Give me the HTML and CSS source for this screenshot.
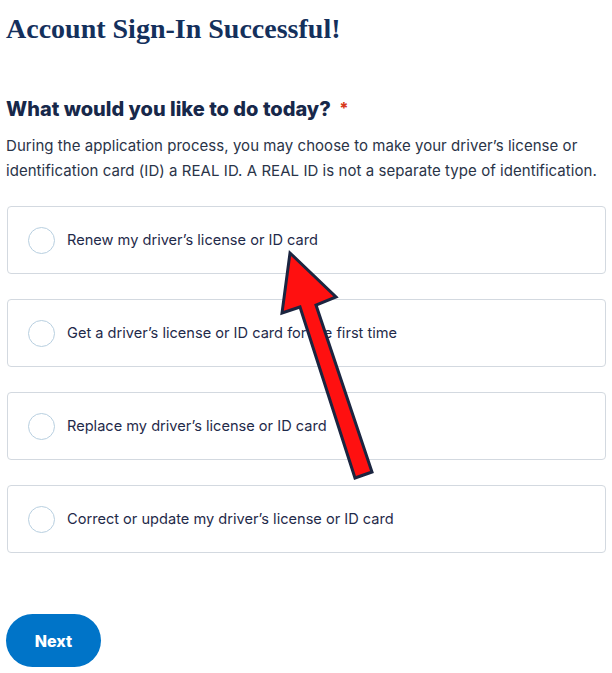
FILE: index.html
```html
<!DOCTYPE html>
<html lang="en">
<head>
    <meta charset="UTF-8">
    <meta name="viewport" content="width=device-width, initial-scale=1.0">
    <title>Account Sign-In Successful</title>
    <link rel="stylesheet" href="styles.css">
</head>
<body>
    <main class="page">
        <h1 class="title">Account Sign-In Successful!</h1>

        <form class="choice-form">
            <h2 class="question">What would you like to do today? <span class="required">*</span></h2>
            <p class="hint">During the application process, you may choose to make your driver’s license or identification card (ID) a REAL ID. A REAL ID is not a separate type of identification.</p>

            <div class="options">
                <label class="option">
                    <span class="radio"></span>
                    <span class="option-text">Renew my driver’s license or ID card</span>
                </label>
                <label class="option">
                    <span class="radio"></span>
                    <span class="option-text">Get a driver’s license or ID card for the first time</span>
                </label>
                <label class="option">
                    <span class="radio"></span>
                    <span class="option-text">Replace my driver’s license or ID card</span>
                </label>
                <label class="option">
                    <span class="radio"></span>
                    <span class="option-text">Correct or update my driver’s license or ID card</span>
                </label>
            </div>

            <button type="button" class="next-btn">Next</button>
        </form>

        <!-- annotation arrow drawn over the options -->
        <svg class="arrow" width="612" height="673" viewBox="0 0 612 673">
            <polygon points="290,253 336,297 316,305 372,472 355,478 300,307 282,313" fill="#ff1010" stroke="#1b2540" stroke-width="3" stroke-linejoin="miter"/>
        </svg>
    </main>
</body>
</html>
```

FILE: styles.css
```css
body {
    margin: 0;
    padding: 0;
    background-color: #fff;
    font-family: 'Inter', sans-serif;
    color: #1b2a47;
}
.page {
    position: relative;
    padding: 0 6px;
}
.title {
    margin: 0;
    padding-top: 12px;
    font-family: 'Liberation Serif', serif;
    font-size: 28px;
    font-weight: bold;
    line-height: 34px;
    color: #14305c;
}
.choice-form {
    margin-top: 49px;
}
.question {
    margin: 0;
    font-size: 20px;
    font-weight: 800;
    line-height: 26px;
    color: #17284a;
}
.required {
    color: #d83a1c;
    font-size: 16px;
    margin-left: 4px;
    vertical-align: 2px;
}
.hint {
    margin: 11px 0 0;
    font-size: 15px;
    letter-spacing: 0.05px;
    line-height: 25px;
    color: #2a3448;
}
.options {
    display: flex;
    flex-direction: column;
    gap: 25px;
    margin-top: 23px;
    padding-left: 1px;
}
.option {
    display: flex;
    align-items: center;
    gap: 12px;
    height: 66px;
    padding: 0 20px;
    border: 1px solid #d3d9e0;
    border-radius: 4px;
    font-size: 14.6px;
    color: #1f2a4a;
}
.radio {
    width: 25px;
    height: 25px;
    border: 1px solid #b8cfe0;
    border-radius: 50%;
    flex-shrink: 0;
}
.next-btn {
    display: block;
    margin-top: 61px;
    width: 95px;
    height: 53px;
    border: none;
    border-radius: 27px;
    background-color: #0074c8;
    color: #fff;
    font-family: 'Inter', sans-serif;
    font-size: 16px;
    font-weight: 800;
}
.arrow {
    position: absolute;
    top: 0;
    left: 0;
    pointer-events: none;
}
```
